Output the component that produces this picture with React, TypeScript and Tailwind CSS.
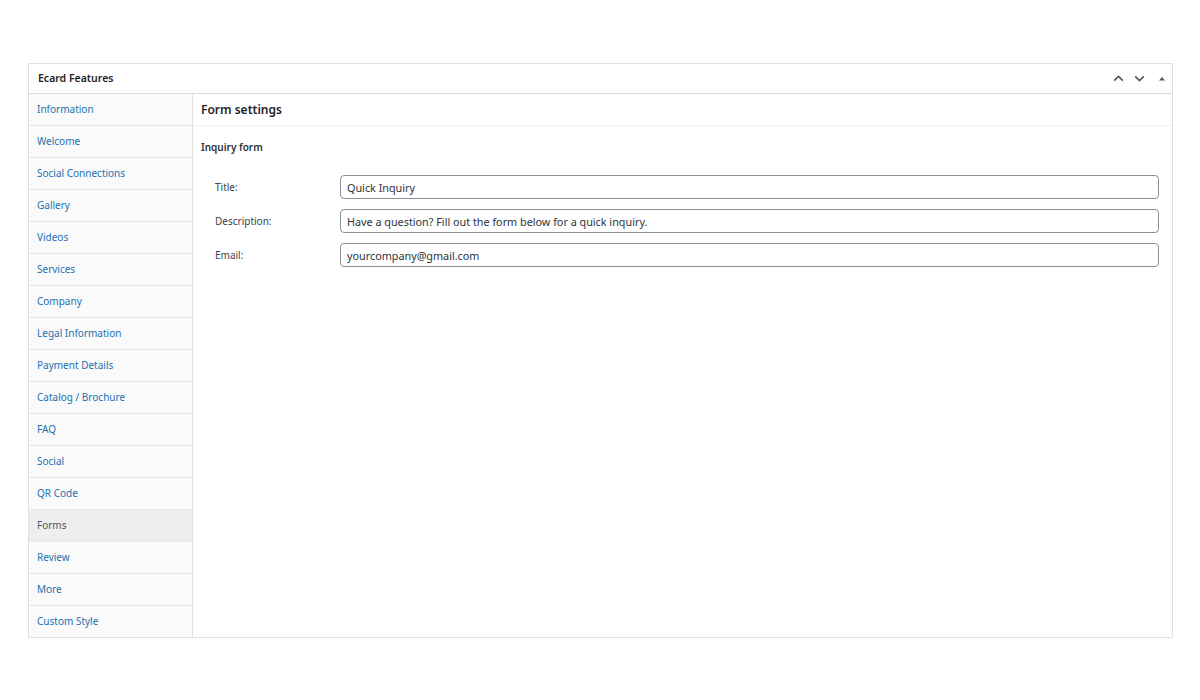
import React from "react";

const tabs = [
  "Information",
  "Welcome",
  "Social Connections",
  "Gallery",
  "Videos",
  "Services",
  "Company",
  "Legal Information",
  "Payment Details",
  "Catalog / Brochure",
  "FAQ",
  "Social",
  "QR Code",
  "Forms",
  "Review",
  "More",
  "Custom Style",
];

const fields = [
  { label: "Title:", value: "Quick Inquiry" },
  { label: "Description:", value: "Have a question? Fill out the form below for a quick inquiry." },
  { label: "Email:", value: "yourcompany@gmail.com" },
];

export default function App() {
  return (
    <div
      className="min-h-[700px] w-[1200px] bg-white pt-[63px] pl-[28px]"
      style={{ fontFamily: '"Noto Sans", "Open Sans", sans-serif' }}
    >
      <div className="w-[1145px] border border-[#e0e0e0] bg-white">
        {/* panel header */}
        <div className="flex h-[30px] items-center justify-between border-b border-[#dcdcde] pl-[9px] pr-[4px]">
          <h2 className="text-[10.5px] font-semibold text-[#1d2327]">Ecard Features</h2>
          <div className="flex items-center gap-[8px] text-[#50575e]">
            <svg width="13" height="13" viewBox="0 0 12 12" fill="none" stroke="currentColor" strokeWidth="1.5">
              <path d="M2 8 L6 4 L10 8" />
            </svg>
            <svg width="13" height="13" viewBox="0 0 12 12" fill="none" stroke="currentColor" strokeWidth="1.5">
              <path d="M2 4 L6 8 L10 4" />
            </svg>
            <svg width="12" height="12" viewBox="0 0 12 12" fill="currentColor" className="ml-[2px]">
              <path d="M3 7.5 L6 4 L9 7.5 Z" />
            </svg>
          </div>
        </div>

        <div className="flex">
          {/* sidebar */}
          <ul className="w-[164px] shrink-0 border-r border-[#e0e0e0] bg-[#fafafa]">
            {tabs.map((t, i) => (
              <li
                key={t}
                className={`flex items-center px-[8px] text-[10px] ${
                  i < tabs.length - 1 ? "h-[32px] border-b border-[#e5e5e5]" : "h-[31px]"
                } ${t === "Forms" ? "bg-[#eeeeee] text-[#50575e]" : "text-[#2271b1]"}`}
              >
                {t}
              </li>
            ))}
          </ul>

          {/* content */}
          <div className="flex-1">
            <div className="flex h-[32px] items-center border-b border-[#f0f0f0] px-[8px]">
              <h3 className="text-[12px] font-semibold text-[#1d2327]">Form settings</h3>
            </div>
            <div className="px-[8px] pt-[14px]">
              <h4 className="text-[10px] font-semibold text-[#2c3338]">Inquiry form</h4>
              <div className="mt-[20px] flex flex-col gap-[10px] pr-[5px]">
                {fields.map((f) => (
                  <div key={f.label} className="flex items-center">
                    <label className="w-[139px] shrink-0 pl-[14px] text-[10px] text-[#3c434a]">{f.label}</label>
                    <input
                      readOnly
                      value={f.value}
                      className="h-[24px] flex-1 rounded-[4px] border border-[#8c8f94] bg-white px-[6px] text-[10.8px] text-[#2c3338] outline-none"
                    />
                  </div>
                ))}
              </div>
            </div>
          </div>
        </div>
      </div>
    </div>
  );
}
